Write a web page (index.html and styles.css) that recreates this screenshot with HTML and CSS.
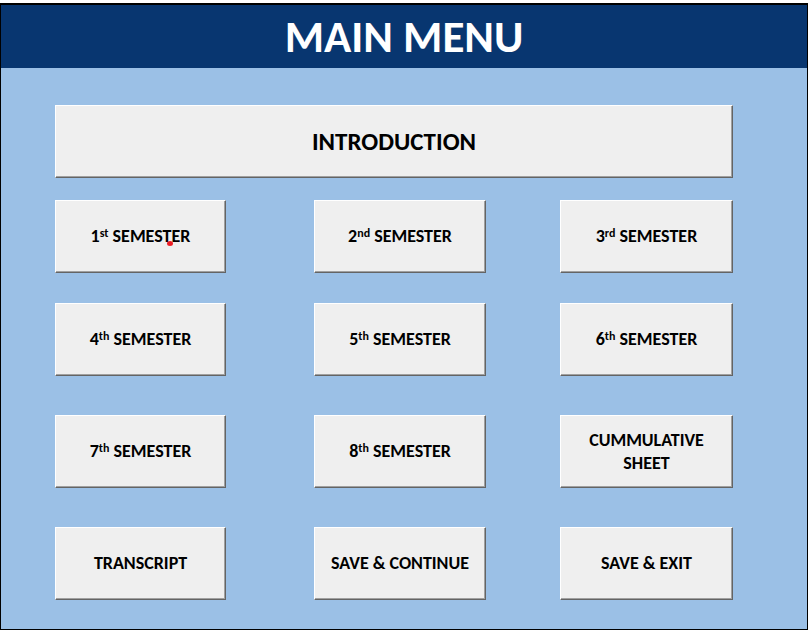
FILE: index.html
```html
<!DOCTYPE html>
<html lang="en">
<head>
<meta charset="utf-8">
<meta name="viewport" content="width=device-width, initial-scale=1">
<title>Main Menu</title>
<link rel="stylesheet" href="styles.css">
</head>
<body>
<div class="window">
  <header class="banner"><h1>MAIN MENU</h1></header>
  <main class="menu">
    <button type="button" class="btn btn-wide">INTRODUCTION</button>
    <div class="row">
      <button type="button" class="btn"><span class="label">1<sup>st</sup> SEMESTER<i class="dot"></i></span></button>
      <button type="button" class="btn"><span class="label">2<sup>nd</sup> SEMESTER</span></button>
      <button type="button" class="btn"><span class="label">3<sup>rd</sup> SEMESTER</span></button>
    </div>
    <div class="row">
      <button type="button" class="btn"><span class="label">4<sup>th</sup> SEMESTER</span></button>
      <button type="button" class="btn"><span class="label">5<sup>th</sup> SEMESTER</span></button>
      <button type="button" class="btn"><span class="label">6<sup>th</sup> SEMESTER</span></button>
    </div>
    <div class="row row-spaced">
      <button type="button" class="btn"><span class="label">7<sup>th</sup> SEMESTER</span></button>
      <button type="button" class="btn"><span class="label">8<sup>th</sup> SEMESTER</span></button>
      <button type="button" class="btn"><span class="label">CUMMULATIVE SHEET</span></button>
    </div>
    <div class="row row-spaced">
      <button type="button" class="btn"><span class="label">TRANSCRIPT</span></button>
      <button type="button" class="btn"><span class="label">SAVE &amp; CONTINUE</span></button>
      <button type="button" class="btn"><span class="label">SAVE &amp; EXIT</span></button>
    </div>
  </main>
</div>
</body>
</html>
```
FILE: styles.css
```css
* {
  box-sizing: border-box;
}

body {
  margin: 0;
  padding: 3px 0 2px;
  background: #fff;
  font-family: Carlito, Lato, sans-serif;
  color: #000;
}

.window {
  border: 1px solid #000;
  border-top-width: 2px;
  background: #9bc0e6;
}

.banner {
  display: flex;
  align-items: center;
  justify-content: center;
  height: 63px;
  background: #083670;
}

.banner h1 {
  margin: 0;
  color: #fff;
  font-size: 45px;
  line-height: 48px;
  font-weight: 700;
}

.menu {
  padding: 37px 74px 29px 54px;
}

.btn {
  min-height: 73px;
  padding: 0 8px;
  border: 1px solid;
  border-color: #fff #646464 #646464 #fff;
  border-radius: 0;
  box-shadow: inset -1px -1px #a0a0a0;
  background: #efefef;
  color: #000;
  font-family: inherit;
  font-size: 18px;
  line-height: 23px;
  font-weight: 700;
}

.btn-wide {
  display: block;
  width: 100%;
  margin-bottom: 22px;
  font-size: 25px;
}

/* The gap after the first column is wider than the one after the second. */
.row {
  display: grid;
  grid-template-columns: 171fr 88fr 172fr 74fr 173fr;
  margin-bottom: 30px;
}

.row .btn:nth-child(2) {
  grid-column: 3;
}

.row .btn:nth-child(3) {
  grid-column: 5;
}

.row-spaced {
  margin-top: 39px;
}

.row:last-child {
  margin-bottom: 0;
}

.label {
  position: relative;
  display: inline-block;
}

.label sup {
  font-size: 12px;
  line-height: 0;
  vertical-align: 5px;
}

.dot {
  position: absolute;
  right: 17px;
  bottom: 2px;
  width: 6px;
  height: 5px;
  border-radius: 50%;
  background: #ed1c24;
}
```
